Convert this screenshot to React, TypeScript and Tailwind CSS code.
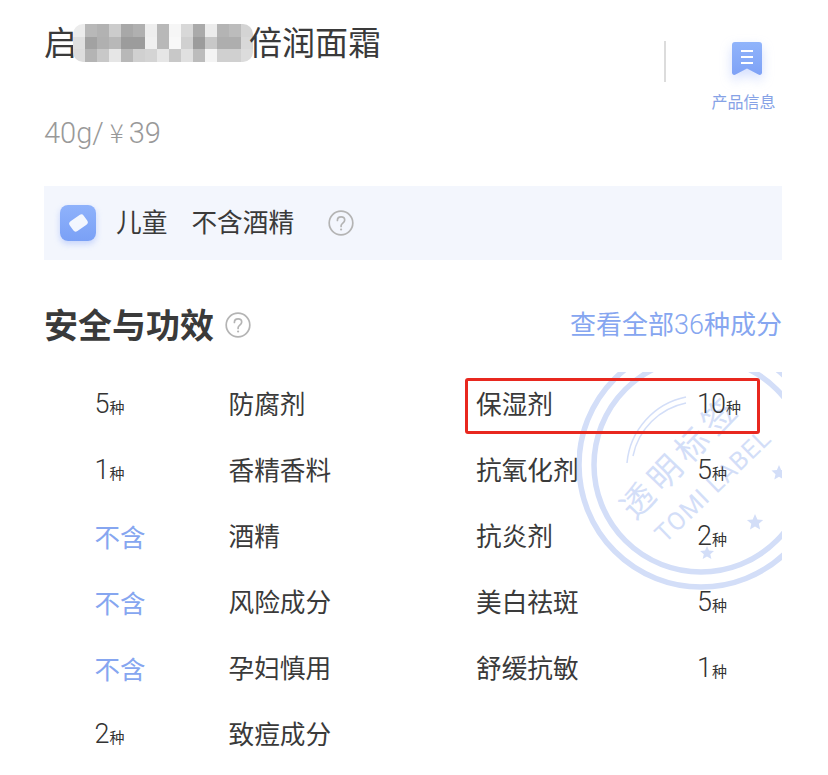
import * as React from "react";

const mosaic = [
  "#ececec", "#b8b8b8", "#b2b2b2", "#cccccc", "#a8a8a8", "#b0b0b0", "#eeeeee", "#b8b8b8", "#f6f6f6", "#d8d8d8", "#aaaaaa", "#ececec", "#b4b4b4", "#bcbcbc", "#d4d4d4",
  "#e0e0e0", "#a2a2a2", "#b0b0b0", "#b8b8b8", "#9c9c9c", "#9c9c9c", "#f0f0f0", "#b8b8b8", "#f8f8f8", "#d0d0d0", "#9c9c9c", "#c8c8c8", "#aeaeae", "#aeaeae", "#d8d8d8",
  "#dddddd", "#b4b4b4", "#c8c8c8", "#e6e6e6", "#b8b8b8", "#d0d0d0", "#d4d4d4", "#e6e6e6", "#c8c8c8", "#e0e0e0", "#bcbcbc", "#f4f4f4", "#d0d0d0", "#d0d0d0", "#dcdcdc",
];

const leftRows = [
  { count: "5", label: "防腐剂" },
  { count: "1", label: "香精香料" },
  { count: null, label: "酒精" },
  { count: null, label: "风险成分" },
  { count: null, label: "孕妇慎用" },
  { count: "2", label: "致痘成分" },
];

const rightRows = [
  { count: "10", label: "保湿剂" },
  { count: "5", label: "抗氧化剂" },
  { count: "2", label: "抗炎剂" },
  { count: "5", label: "美白祛斑" },
  { count: "1", label: "舒缓抗敏" },
];

const Help = () => (
  <svg width="26" height="26" viewBox="0 0 26 26" fill="none" className="shrink-0">
    <circle cx="13" cy="13" r="11.8" stroke="#b4b4b4" strokeWidth="1.7" />
    <path
      d="M9.4 10.4c0-2.2 1.600-3.600 3.700-3.600s3.600 1.300 3.600 3.200c0 1.500-.9 2.300-1.900 3.100-1 .8-1.700 1.400-1.700 2.700v.6"
      stroke="#b4b4b4"
      strokeWidth="1.7"
      strokeLinecap="round"
    />
    <circle cx="13.1" cy="19.5" r="1.1" fill="#b4b4b4" />
  </svg>
);

const Count = ({ n }: { n: string | null }) =>
  n === null ? (
    <span className="block mt-[3px] text-[25.5px] text-[#86a6f0]">不含</span>
  ) : (
    <span className="flex items-baseline mt-[2px] text-[#333333]">
      <span className="font-['Roboto'] text-[27px] font-light tracking-[-1px]">{n}</span>
      <span className="ml-[1px] text-[15px]">种</span>
    </span>
  );

const Stamp = () => (
  <svg viewBox="577 372 205 228" className="absolute top-0 right-0 w-[205px] h-[228px]" fill="none">
    <g stroke="#d3def8">
      <circle cx="701" cy="465" r="122" strokeWidth="5.500" />
      <circle cx="701" cy="465" r="107" strokeWidth="5.500" />
      <path d="M627 463A74 74 0 0 1 686 397" strokeWidth="1.500" />
      <path d="M633 456A68 68 0 0 1 686 403" strokeWidth="1.500" />
    </g>
    <g fill="#d3def8">
      <text x="689" y="465" textAnchor="middle" fontSize="33" letterSpacing="6" transform="rotate(-46 689 465)" fontFamily="'Noto Sans CJK SC', sans-serif">透明标签</text>
      <text x="719" y="492" textAnchor="middle" fontSize="25" letterSpacing="1" transform="rotate(-44 719 492)" fontFamily="'Roboto', sans-serif">TOMI LABEL</text>
      <path d="M755 514l2.400 5.400 5.800.6-4.400 3.800 1.300 5.700-5.100-3-5 3 1.300-5.700-4.400-3.800 5.800-.6z" />
      <path d="M779 465l2.200 5 5.400.6-4 3.600 1.200 5.300-4.800-2.800-4.700 2.800 1.200-5.300-4-3.600 5.400-.6z" />
      <path d="M707 546l2 4.500 5 .5-3.700 3.200 1.100 4.800-4.400-2.500-4.300 2.500 1.100-4.800-3.700-3.200 5-.5z" />
    </g>
  </svg>
);

export default function App() {
  return (
    <div className="w-[828px] h-[775px] overflow-hidden bg-white pl-[44px] pr-[46px] font-['Noto_Sans_CJK_SC',sans-serif] text-[#3a3a3a]">
      <div className="flex justify-between h-[186px]">
        <div>
          <div className="flex items-center h-[38px] mt-[22px] text-[33px] leading-none">
            <span>启</span>
            <div className="grid grid-cols-[repeat(15,12px)] mt-[4px] -ml-[4px] mr-[-4px] rounded-[10px] overflow-hidden">
              {mosaic.map((c, i) => (
                <div key={i} className="h-[12.5px]" style={{ backgroundColor: c }} />
              ))}
            </div>
            <span>倍润面霜</span>
          </div>
          <div className="mt-[53px] font-['Roboto'] text-[29px] leading-[38px] font-light text-[#999999]">
            40g/<span className="ml-[6px] font-['Noto_Sans_CJK_SC'] text-[26px]">¥</span>
            <span className="ml-[5px]">39</span>
          </div>
        </div>
        <div className="flex items-start pt-[41px]">
          <div className="w-[2px] h-[41px] bg-[#dcdcdc] mr-[45px]" />
          <div className="flex flex-col items-center w-[65px] mr-[6px]">
            <svg width="30" height="34" viewBox="0 0 30 34" className="mt-[1px] ml-[6px] drop-shadow-[0_5px_6px_rgba(130,160,250,0.35)]">
              <defs>
                <linearGradient id="docGrad" x1="0" y1="0" x2="0" y2="1">
                  <stop offset="0" stopColor="#90b4fb" />
                  <stop offset="1" stopColor="#7fa2f6" />
                </linearGradient>
              </defs>
              <path d="M3 0h24a3 3 0 0 1 3 3v27.500c0 2-2 3-3.600 2L15 26.500 3.600 32.500C2 33.500 0 32.500 0 30.500V3a3 3 0 0 1 3-3z" fill="url(#docGrad)" />
              <path d="M9 9h12M9 15h12M9 21h12" stroke="#fff" strokeWidth="2" />
            </svg>
            <span className="mt-[15px] whitespace-nowrap text-[16px] leading-[20px] text-[#86a2e6]">产品信息</span>
          </div>
        </div>
      </div>

      <div className="flex items-center h-[74px] bg-[#f3f6fd] pl-[16px]">
        <div className="flex items-center justify-center w-[36px] h-[36px] rounded-[8px] bg-gradient-to-b from-[#8fb2fb] to-[#7aa0f6] shadow-[0_3px_6px_rgba(130,160,250,0.4)]">
          <div className="w-[17px] h-[12px] rounded-[3px] bg-white/90 -rotate-[35deg]" />
        </div>
        <span className="ml-[20px] -mt-[3px] text-[25.7px]">儿童</span>
        <span className="ml-[24px] -mt-[3px] text-[25.7px]">不含酒精</span>
        <span className="ml-[34px]">
          <Help />
        </span>
      </div>

      <div className="flex items-center justify-between h-[50px] mt-[40px]">
        <div className="flex items-center">
          <span className="-mt-[3px] text-[34px] font-bold">安全与功效</span>
          <span className="ml-[11px]">
            <Help />
          </span>
        </div>
        <span className="-mt-[2px] text-[26px] text-[#86a6f0]">
          查看全部<span className="font-['Roboto'] text-[27px] font-light">36</span>种成分
        </span>
      </div>

      <div className="relative flow-root mt-[22px] h-[403px]">
        <Stamp />
        <div className="relative grid grid-cols-[432px_1fr] -mt-[2px]">
          <div>
            {leftRows.map((r) => (
              <div key={r.label} className="flex items-center h-[66px]">
                <div className="w-[184.500px] pl-[50.500px]">
                  <Count n={r.count} />
                </div>
                <span className="text-[25.7px]">{r.label}</span>
              </div>
            ))}
          </div>
          <div>
            {rightRows.map((r) => (
              <div key={r.label} className="flex items-center h-[66px]">
                <span className="w-[221px] text-[25.7px]">{r.label}</span>
                <Count n={r.count} />
              </div>
            ))}
          </div>
        </div>
        <div className="absolute left-[421px] top-[6px] w-[295px] h-[56px] border-[3px] border-[#e8281f] rounded-[3px]" />
      </div>
    </div>
  );
}
